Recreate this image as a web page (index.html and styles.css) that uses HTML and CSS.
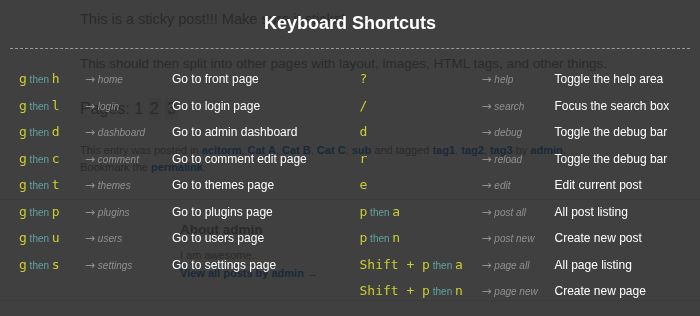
FILE: index.html
```html
<!DOCTYPE html>
<html lang="en">
<head>
  <meta charset="UTF-8" />
  <meta name="viewport" content="width=device-width, initial-scale=1" />
  <title>Keyboard Shortcuts</title>
  <link rel="stylesheet" href="styles.css">
</head>
<body>
  <div class="page">
    <p class="sticky">This is a sticky post!!! Make sure it sticks!</p>
    <p class="intro">This should then split into other pages with layout, images, HTML tags, and other things.</p>
    <p class="pages">Pages: <span class="num">1</span> <a class="num link" href="#">2</a> <a class="num link" href="#">3</a></p>
    <p class="meta">This entry was posted in <a href="#">acitorm</a>, <a href="#">Cat A</a>, <a href="#">Cat B</a>, <a href="#">Cat C</a>, <a href="#">sub</a> and tagged <a href="#">tag1</a>, <a href="#">tag2</a>, <a href="#">tag3</a> by <a href="#">admin</a>.<br>Bookmark the <a href="#">permalink</a>.</p>
    <div class="author">
      <h3>About admin</h3>
      <p class="bio">I am awesome.</p>
      <a class="all-posts" href="#">View all posts by admin &rarr;</a>
    </div>
  </div>

  <div class="shortcuts">
    <h2>Keyboard Shortcuts</h2>
    <div class="columns">
      <div class="col left">
        <div class="row"><span class="keys"><kbd>g</kbd> <span class="then">then</span> <kbd>h</kbd></span><span class="route"><b>&rarr;</b> home</span><span class="desc">Go to front page</span></div>
        <div class="row"><span class="keys"><kbd>g</kbd> <span class="then">then</span> <kbd>l</kbd></span><span class="route"><b>&rarr;</b> login</span><span class="desc">Go to login page</span></div>
        <div class="row"><span class="keys"><kbd>g</kbd> <span class="then">then</span> <kbd>d</kbd></span><span class="route"><b>&rarr;</b> dashboard</span><span class="desc">Go to admin dashboard</span></div>
        <div class="row"><span class="keys"><kbd>g</kbd> <span class="then">then</span> <kbd>c</kbd></span><span class="route"><b>&rarr;</b> comment</span><span class="desc">Go to comment edit page</span></div>
        <div class="row"><span class="keys"><kbd>g</kbd> <span class="then">then</span> <kbd>t</kbd></span><span class="route"><b>&rarr;</b> themes</span><span class="desc">Go to themes page</span></div>
        <div class="row"><span class="keys"><kbd>g</kbd> <span class="then">then</span> <kbd>p</kbd></span><span class="route"><b>&rarr;</b> plugins</span><span class="desc">Go to plugins page</span></div>
        <div class="row"><span class="keys"><kbd>g</kbd> <span class="then">then</span> <kbd>u</kbd></span><span class="route"><b>&rarr;</b> users</span><span class="desc">Go to users page</span></div>
        <div class="row"><span class="keys"><kbd>g</kbd> <span class="then">then</span> <kbd>s</kbd></span><span class="route"><b>&rarr;</b> settings</span><span class="desc">Go to settings page</span></div>
      </div>
      <div class="col right">
        <div class="row"><span class="keys"><kbd>?</kbd></span><span class="route"><b>&rarr;</b> help</span><span class="desc">Toggle the help area</span></div>
        <div class="row"><span class="keys"><kbd>/</kbd></span><span class="route"><b>&rarr;</b> search</span><span class="desc">Focus the search box</span></div>
        <div class="row"><span class="keys"><kbd>d</kbd></span><span class="route"><b>&rarr;</b> debug</span><span class="desc">Toggle the debug bar</span></div>
        <div class="row"><span class="keys"><kbd>r</kbd></span><span class="route"><b>&rarr;</b> reload</span><span class="desc">Toggle the debug bar</span></div>
        <div class="row"><span class="keys"><kbd>e</kbd></span><span class="route"><b>&rarr;</b> edit</span><span class="desc">Edit current post</span></div>
        <div class="row"><span class="keys"><kbd>p</kbd> <span class="then">then</span> <kbd>a</kbd></span><span class="route"><b>&rarr;</b> post all</span><span class="desc">All post listing</span></div>
        <div class="row"><span class="keys"><kbd>p</kbd> <span class="then">then</span> <kbd>n</kbd></span><span class="route"><b>&rarr;</b> post new</span><span class="desc">Create new post</span></div>
        <div class="row"><span class="keys"><kbd>Shift + p</kbd> <span class="then">then</span> <kbd>a</kbd></span><span class="route"><b>&rarr;</b> page all</span><span class="desc">All page listing</span></div>
        <div class="row"><span class="keys"><kbd>Shift + p</kbd> <span class="then">then</span> <kbd>n</kbd></span><span class="route"><b>&rarr;</b> page new</span><span class="desc">Create new page</span></div>
      </div>
    </div>
  </div>
</body>
</html>
```

FILE: styles.css
```css
body {
  margin: 0;
  background: #fff;
  font-family: 'Liberation Sans', Arial, sans-serif;
  color: #a8a8a8;
}

/* page underneath the overlay */
.page {
  padding: 9px 0 0 80px;
}

.page p {
  margin: 0;
}

.page a {
  color: #6aa2e0;
  font-weight: bold;
  text-decoration: none;
}

.sticky {
  font-size: 14.5px;
  line-height: 20px;
}

.intro {
  font-size: 13.5px;
  line-height: 20px;
  margin-top: 25px !important;
}

.pages {
  font-size: 16px;
  line-height: 22px;
  margin-top: 24px !important;
}

.pages .num {
  display: inline-block;
}

.pages a.link {
  font-weight: normal;
  color: #a8a8a8;
  padding: 0 2px;
  background: #f2f2f2;
}

.meta {
  font-size: 11px;
  line-height: 17px;
  margin-top: 22px !important;
}

.author {
  margin: 23px 0 0 -80px;
  padding: 21px 0 18px 180px;
  border-top: 1px solid #eee;
  border-bottom: 1px solid #eee;
}

.author h3 {
  margin: 0;
  font-size: 13.5px;
  line-height: 18px;
}

.author .bio {
  font-size: 11px;
  line-height: 17px;
  margin-top: 8px;
}

.author .all-posts {
  display: block;
  font-size: 11px;
  line-height: 17px;
  margin-top: 1px;
}

/* keyboard shortcuts overlay */
.shortcuts {
  position: fixed;
  inset: 0;
  background: rgba(0, 0, 0, 0.75);
}

.shortcuts h2 {
  margin: 0 10px;
  padding: 12px 0 14px;
  font-size: 18px;
  line-height: 22px;
  color: #fff;
  text-align: center;
  border-bottom: 1px dashed #9a9a9a;
}

.columns {
  display: flex;
  padding: 17px 0 0 19px;
}

.col {
  width: 342px;
}

.row {
  display: grid;
  align-items: baseline;
  height: 26.5px;
  line-height: 26.5px;
}

.left .row {
  grid-template-columns: 66px 87px 1fr;
}

.right .row {
  grid-template-columns: 122px 73px 1fr;
}

.keys {
  font-size: 10px;
  white-space: nowrap;
}

kbd {
  font-family: 'DejaVu Sans Mono', monospace;
  font-size: 13px;
  color: #c9cd2e;
}

.then {
  color: #5fa3a0;
}

.route {
  font-size: 10px;
  font-style: italic;
  color: #8f8f8f;
  white-space: nowrap;
}

.route b {
  font-family: 'DejaVu Sans', sans-serif;
  font-style: normal;
  font-weight: normal;
  font-size: 12px;
}

.desc {
  font-size: 12px;
  color: #fff;
  white-space: nowrap;
}
```
